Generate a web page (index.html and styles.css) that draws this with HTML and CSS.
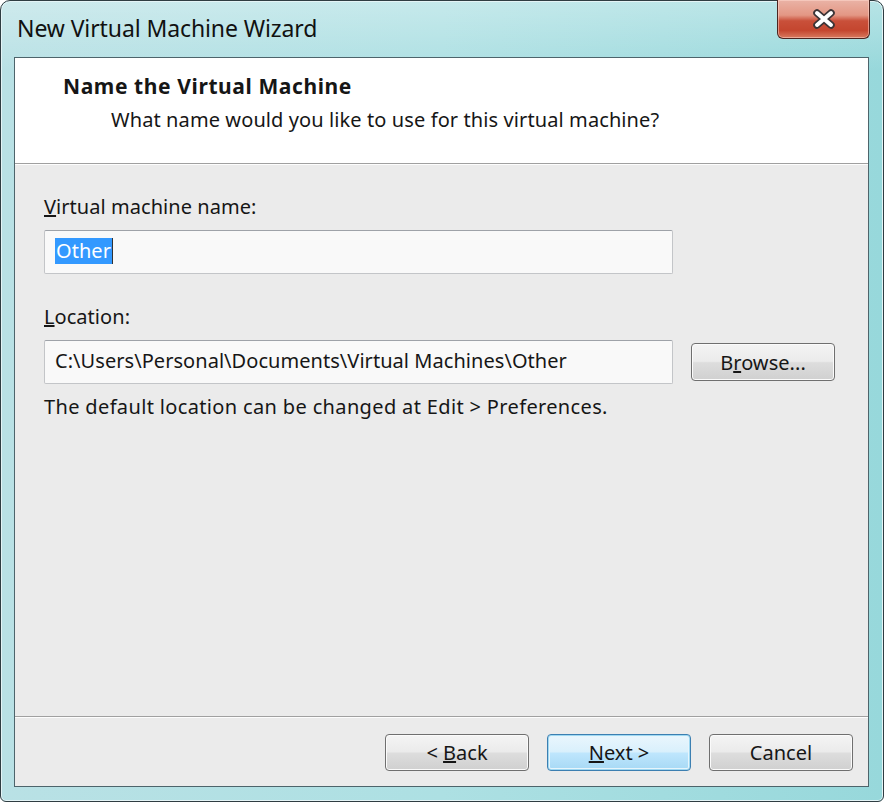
FILE: index.html
```html
<!DOCTYPE html>
<html lang="en">
<head>
  <meta charset="UTF-8" />
  <title>New Virtual Machine Wizard</title>
  <link rel="stylesheet" href="styles.css">
</head>
<body>

  <!-- Aero window frame -->
  <div class="window">
    <div class="titlebar">
      <span class="title">New Virtual Machine Wizard</span>
      <div class="close">
        <svg width="28" height="22" viewBox="0 0 28 22">
          <path d="M7 5 L21 17 M21 5 L7 17" stroke="#3b3436" stroke-width="7.5" stroke-linecap="round" fill="none"/>
          <path d="M7 5 L21 17 M21 5 L7 17" stroke="#fff" stroke-width="4" stroke-linecap="round" fill="none"/>
        </svg>
      </div>
    </div>

    <div class="client">
      <!-- Page header -->
      <div class="header">
        <div class="heading">Name the Virtual Machine</div>
        <div class="subheading">What name would you like to use for this virtual machine?</div>
      </div>

      <!-- Form body -->
      <div class="body">
        <div class="label"><u>V</u>irtual machine name:</div>
        <div class="field name-field"><span class="selected">Other</span><span class="caret"></span></div>

        <div class="label location-label"><u>L</u>ocation:</div>
        <div class="row">
          <div class="field">C:\Users\Personal\Documents\Virtual Machines\Other</div>
          <div class="button browse"><span>B<u>r</u>owse...</span></div>
        </div>
        <div class="note">The default location can be changed at Edit &gt; Preferences.</div>
      </div>

      <!-- Wizard buttons -->
      <div class="footer">
        <div class="button"><span>&lt; <u>B</u>ack</span></div>
        <div class="button default"><span><u>N</u>ext &gt;</span></div>
        <div class="button"><span>Cancel</span></div>
      </div>
    </div>
  </div>

</body>
</html>
```

FILE: styles.css
```css
/* ----- Reset ----- */
* {
  margin: 0;
  padding: 0;
  box-sizing: border-box;
}

html, body {
  width: 884px;
  height: 802px;
  overflow: hidden;
  background: #fff;
  font-family: "Noto Sans", "Open Sans", sans-serif;
  color: #161616;
}

/* ----- Window frame ----- */
.window {
  position: relative;
  width: 884px;
  height: 802px;
  display: flex;
  flex-direction: column;
  border: 1px solid #2f3d42;
  border-radius: 10px 10px 6px 6px;
  background:
    linear-gradient(180deg, rgba(255, 255, 255, 0.3) 0, rgba(255, 255, 255, 0) 70px),
    linear-gradient(90deg, #b9e1e5 0%, #ade0e3 50%, #97d8db 100%);
  box-shadow: inset 0 0 0 1px #e4f4f6;
}

.titlebar {
  height: 56px;
  flex: none;
  display: flex;
  align-items: center;
  padding-left: 16px;
  padding-bottom: 2px;
}
.title {
  font-size: 23px;
  color: #111;
  letter-spacing: -0.1px;
}

/* Close button sits over the frame */
.close {
  position: absolute;
  top: -1px;
  right: 13px;
  width: 93px;
  height: 39px;
  display: flex;
  align-items: center;
  justify-content: center;
  border: 1px solid #4b2520;
  border-top: none;
  border-radius: 0 0 6px 6px;
  background: linear-gradient(#eab3a6 0%, #e39784 40%, #c9503a 55%, #c4462f 80%, #d87a5f 100%);
  box-shadow: inset 0 0 0 1px rgba(255, 220, 210, 0.5);
}

/* ----- Client area ----- */
.client {
  flex: 1;
  display: flex;
  flex-direction: column;
  margin: 0 14px 14px 13px;
  border: 1px solid #4d646b;
  background: #ebebeb;
}

.header {
  height: 106px;
  flex: none;
  padding: 16px 0 0 48px;
  background: #fff;
  border-bottom: 1px solid #a0a0a0;
}
.heading {
  font-size: 21px;
  font-weight: bold;
  line-height: 24px;
  letter-spacing: 0.6px;
}
.subheading {
  font-size: 20px;
  line-height: 24px;
  margin-top: 10px;
  padding-left: 48px;
  letter-spacing: 0.1px;
}

.body {
  flex: 1;
  padding: 30px 0 0 29px;
  border-top: 1px solid #fdfdfd;
  font-size: 20px;
  letter-spacing: 0.05px;
}
.label {
  line-height: 24px;
}
.location-label {
  margin-top: 31px;
}
.field {
  width: 629px;
  height: 44px;
  margin-top: 11px;
  display: flex;
  align-items: center;
  padding-left: 10px;
  padding-bottom: 2px;
  line-height: 26px;
  background: #f9f9f9;
  border: 1px solid #c3c5c8;
  border-top-color: #9ea2a8;
  border-radius: 2px;
}
.name-field .selected {
  background: #3399ff;
  color: #fff;
  padding: 0 1px;
}
.caret {
  width: 1px;
  height: 26px;
  background: #333;
}

.row {
  display: flex;
  align-items: center;
  gap: 18px;
}
.row .browse {
  margin-top: 11px;
}
.note {
  margin-top: 11px;
  line-height: 24px;
  letter-spacing: 0.35px;
}

/* ----- Buttons ----- */
.button {
  width: 144px;
  height: 38px;
  display: flex;
  align-items: center;
  justify-content: center;
  font-size: 20px;
  border: 1px solid #6f6f6f;
  border-radius: 4px;
  background: linear-gradient(#f4f4f4 0%, #ebebeb 48%, #dddddd 52%, #d0d0d0 100%);
  box-shadow: inset 0 0 0 1px #fbfbfb;
}
.button.default {
  border-color: #3c7fb1;
  background: linear-gradient(#eaf6fd 0%, #d9f0fc 48%, #bee6fd 52%, #a7d9f5 100%);
  box-shadow: inset 0 0 0 1px #9fd8f2, inset 0 0 0 2px #e6f5fc;
}

.footer {
  height: 70px;
  flex: none;
  display: flex;
  justify-content: flex-end;
  gap: 18px;
  padding: 17px 15px 0 0;
  border-top: 1px solid #a0a0a0;
  box-shadow: inset 0 1px #fdfdfd;
}
.footer .button {
  height: 37px;
}
```
